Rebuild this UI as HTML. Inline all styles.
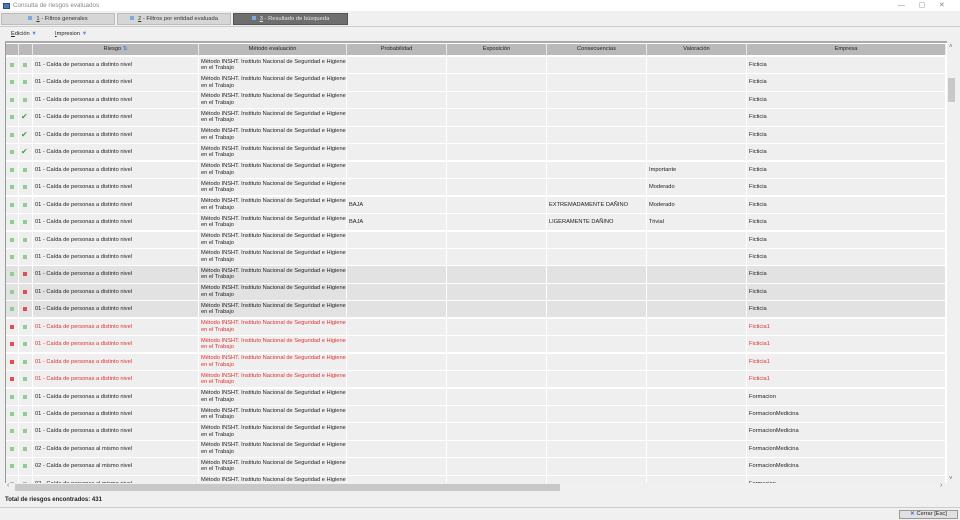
<!DOCTYPE html>
<html><head><meta charset="utf-8"><style>
*{box-sizing:border-box;margin:0;padding:0}
body{width:960px;height:520px;overflow:hidden;background:#fff;font-family:"Liberation Sans",sans-serif;font-size:5.7px;color:#222;position:relative}
.abs{position:absolute}
.tab{position:absolute;top:13px;height:12px;background:#d6d6d6;border:1px solid #bdbdbd;text-align:center;line-height:10px;font-size:5.8px;color:#333}
.tab i{display:inline-block;width:4px;height:4px;background:#7fa8e0;margin-right:4px;vertical-align:middle}
.hd{position:absolute;top:44px;height:11px;background:#b9b9b9;border-right:1px solid #e8e8e8;text-align:center;line-height:11px;color:#222}
.row{position:absolute;left:0;width:940px;height:17.45px}
.c{position:absolute;top:0;height:16.2px;background:#efefef;border-right:1.5px solid #fff;padding-left:2px;line-height:16px;white-space:nowrap;overflow:hidden}
.g .c{background:#e2e2e2}
.r .c{color:#e03030}
.m{line-height:6.6px;padding-top:1.5px;white-space:normal}
.sq{position:absolute;left:4px;top:6px;width:4px;height:4px;background:#8ecf8e}
.sq.red{background:#e05050}
.ck{position:absolute;left:2px;top:2px;color:#3aa53a;font-size:8px;line-height:12px}
.a{left:0;width:13px}.b{left:13px;width:14px}.d{left:27px;width:166px}.e{left:193px;width:148px}
.f{left:341px;width:100px}.h{left:441px;width:100px}.k{left:541px;width:100px}.l{left:641px;width:100px}.n{left:741px;width:199px}
</style></head><body>
<div class="abs" style="left:3px;top:3px;width:7px;height:6px;background:#4a7ab8;border:1px solid #2a4a80"></div>
<div class="abs" style="left:13px;top:1px;font-size:6.3px;color:#888;line-height:10px">Consulta de riesgos evaluados</div>
<div class="abs" style="left:898px;top:1px;color:#888;font-size:7px;line-height:10px">—&nbsp;&nbsp;&nbsp;&nbsp;&nbsp;&nbsp;&nbsp;▢&nbsp;&nbsp;&nbsp;&nbsp;&nbsp;&nbsp;&nbsp;✕</div>
<div class="abs" style="left:0;top:11px;width:960px;height:16px;background:#f0f0f0;border-bottom:1px solid #ccc"></div>
<div class="tab" style="left:1px;width:114px"><i></i><u>1</u> - Filtros generales</div>
<div class="tab" style="left:117px;width:114px"><i></i><u>2</u> - Filtros por entidad evaluada</div>
<div class="tab" style="left:233px;width:115px;background:#6e6e6e;color:#e8e8e8;border-color:#555"><i></i><u>3</u> - Resultado de búsqueda</div>
<div class="abs" style="left:0;top:27px;width:960px;height:480px;background:#f0f0f0"></div>
<div class="abs" style="left:11px;top:30px;line-height:9px"><u>E</u>dición <span style="color:#6a8fd0">▼</span></div>
<div class="abs" style="left:55px;top:30px;line-height:9px"><u>I</u>mpresion <span style="color:#6a8fd0">▼</span></div>
<div class="abs" style="left:5px;top:41px;width:942px;height:2px;background:#aaa"></div>
<div class="abs" style="left:5px;top:43px;width:942px;height:441px;background:#fff;border-left:1px solid #999"></div>
<div class="hd" style="left:6px;width:13px"></div>
<div class="hd" style="left:19px;width:14px"></div>
<div class="hd" style="left:33px;width:166px">Riesgo <span style="color:#3a7ad0">⇅</span></div>
<div class="hd" style="left:199px;width:148px">Método evaluación</div>
<div class="hd" style="left:347px;width:100px">Probabilidad</div>
<div class="hd" style="left:447px;width:100px">Exposición</div>
<div class="hd" style="left:547px;width:100px">Consecuencias</div>
<div class="hd" style="left:647px;width:100px">Valoración</div>
<div class="hd" style="left:747px;width:199px">Empresa</div>
<div class="abs" style="left:6px;top:57px;width:940px;height:426px;overflow:hidden">
<div class="row" style="top:0px"><div class="c a"><i class="sq"></i></div><div class="c b"><i class="sq"></i></div><div class="c d">01 - Caída de personas a distinto nivel</div><div class="c e m">Método INSHT. Instituto Nacional de Seguridad e Higiene en el Trabajo</div><div class="c f"></div><div class="c h"></div><div class="c k"></div><div class="c l"></div><div class="c n">Ficticia</div></div>
<div class="row" style="top:17.45px"><div class="c a"><i class="sq"></i></div><div class="c b"><i class="sq"></i></div><div class="c d">01 - Caída de personas a distinto nivel</div><div class="c e m">Método INSHT. Instituto Nacional de Seguridad e Higiene en el Trabajo</div><div class="c f"></div><div class="c h"></div><div class="c k"></div><div class="c l"></div><div class="c n">Ficticia</div></div>
<div class="row" style="top:34.9px"><div class="c a"><i class="sq"></i></div><div class="c b"><i class="sq"></i></div><div class="c d">01 - Caída de personas a distinto nivel</div><div class="c e m">Método INSHT. Instituto Nacional de Seguridad e Higiene en el Trabajo</div><div class="c f"></div><div class="c h"></div><div class="c k"></div><div class="c l"></div><div class="c n">Ficticia</div></div>
<div class="row" style="top:52.35px"><div class="c a"><i class="sq"></i></div><div class="c b"><span class="ck">✔</span></div><div class="c d">01 - Caída de personas a distinto nivel</div><div class="c e m">Método INSHT. Instituto Nacional de Seguridad e Higiene en el Trabajo</div><div class="c f"></div><div class="c h"></div><div class="c k"></div><div class="c l"></div><div class="c n">Ficticia</div></div>
<div class="row" style="top:69.8px"><div class="c a"><i class="sq"></i></div><div class="c b"><span class="ck">✔</span></div><div class="c d">01 - Caída de personas a distinto nivel</div><div class="c e m">Método INSHT. Instituto Nacional de Seguridad e Higiene en el Trabajo</div><div class="c f"></div><div class="c h"></div><div class="c k"></div><div class="c l"></div><div class="c n">Ficticia</div></div>
<div class="row" style="top:87.25px"><div class="c a"><i class="sq"></i></div><div class="c b"><span class="ck">✔</span></div><div class="c d">01 - Caída de personas a distinto nivel</div><div class="c e m">Método INSHT. Instituto Nacional de Seguridad e Higiene en el Trabajo</div><div class="c f"></div><div class="c h"></div><div class="c k"></div><div class="c l"></div><div class="c n">Ficticia</div></div>
<div class="row" style="top:104.7px"><div class="c a"><i class="sq"></i></div><div class="c b"><i class="sq"></i></div><div class="c d">01 - Caída de personas a distinto nivel</div><div class="c e m">Método INSHT. Instituto Nacional de Seguridad e Higiene en el Trabajo</div><div class="c f"></div><div class="c h"></div><div class="c k"></div><div class="c l">Importante</div><div class="c n">Ficticia</div></div>
<div class="row" style="top:122.15px"><div class="c a"><i class="sq"></i></div><div class="c b"><i class="sq"></i></div><div class="c d">01 - Caída de personas a distinto nivel</div><div class="c e m">Método INSHT. Instituto Nacional de Seguridad e Higiene en el Trabajo</div><div class="c f"></div><div class="c h"></div><div class="c k"></div><div class="c l">Moderado</div><div class="c n">Ficticia</div></div>
<div class="row" style="top:139.6px"><div class="c a"><i class="sq"></i></div><div class="c b"><i class="sq"></i></div><div class="c d">01 - Caída de personas a distinto nivel</div><div class="c e m">Método INSHT. Instituto Nacional de Seguridad e Higiene en el Trabajo</div><div class="c f">BAJA</div><div class="c h"></div><div class="c k">EXTREMADAMENTE DAÑINO</div><div class="c l">Moderado</div><div class="c n">Ficticia</div></div>
<div class="row" style="top:157.05px"><div class="c a"><i class="sq"></i></div><div class="c b"><i class="sq"></i></div><div class="c d">01 - Caída de personas a distinto nivel</div><div class="c e m">Método INSHT. Instituto Nacional de Seguridad e Higiene en el Trabajo</div><div class="c f">BAJA</div><div class="c h"></div><div class="c k">LIGERAMENTE DAÑINO</div><div class="c l">Trivial</div><div class="c n">Ficticia</div></div>
<div class="row" style="top:174.5px"><div class="c a"><i class="sq"></i></div><div class="c b"><i class="sq"></i></div><div class="c d">01 - Caída de personas a distinto nivel</div><div class="c e m">Método INSHT. Instituto Nacional de Seguridad e Higiene en el Trabajo</div><div class="c f"></div><div class="c h"></div><div class="c k"></div><div class="c l"></div><div class="c n">Ficticia</div></div>
<div class="row" style="top:191.95px"><div class="c a"><i class="sq"></i></div><div class="c b"><i class="sq"></i></div><div class="c d">01 - Caída de personas a distinto nivel</div><div class="c e m">Método INSHT. Instituto Nacional de Seguridad e Higiene en el Trabajo</div><div class="c f"></div><div class="c h"></div><div class="c k"></div><div class="c l"></div><div class="c n">Ficticia</div></div>
<div class="row g" style="top:209.4px"><div class="c a"><i class="sq"></i></div><div class="c b"><i class="sq red"></i></div><div class="c d">01 - Caída de personas a distinto nivel</div><div class="c e m">Método INSHT. Instituto Nacional de Seguridad e Higiene en el Trabajo</div><div class="c f"></div><div class="c h"></div><div class="c k"></div><div class="c l"></div><div class="c n">Ficticia</div></div>
<div class="row g" style="top:226.85px"><div class="c a"><i class="sq"></i></div><div class="c b"><i class="sq red"></i></div><div class="c d">01 - Caída de personas a distinto nivel</div><div class="c e m">Método INSHT. Instituto Nacional de Seguridad e Higiene en el Trabajo</div><div class="c f"></div><div class="c h"></div><div class="c k"></div><div class="c l"></div><div class="c n">Ficticia</div></div>
<div class="row g" style="top:244.3px"><div class="c a"><i class="sq"></i></div><div class="c b"><i class="sq red"></i></div><div class="c d">01 - Caída de personas a distinto nivel</div><div class="c e m">Método INSHT. Instituto Nacional de Seguridad e Higiene en el Trabajo</div><div class="c f"></div><div class="c h"></div><div class="c k"></div><div class="c l"></div><div class="c n">Ficticia</div></div>
<div class="row r" style="top:261.75px"><div class="c a"><i class="sq red"></i></div><div class="c b"><i class="sq"></i></div><div class="c d">01 - Caída de personas a distinto nivel</div><div class="c e m">Método INSHT. Instituto Nacional de Seguridad e Higiene en el Trabajo</div><div class="c f"></div><div class="c h"></div><div class="c k"></div><div class="c l"></div><div class="c n">Ficticia1</div></div>
<div class="row r" style="top:279.2px"><div class="c a"><i class="sq red"></i></div><div class="c b"><i class="sq"></i></div><div class="c d">01 - Caída de personas a distinto nivel</div><div class="c e m">Método INSHT. Instituto Nacional de Seguridad e Higiene en el Trabajo</div><div class="c f"></div><div class="c h"></div><div class="c k"></div><div class="c l"></div><div class="c n">Ficticia1</div></div>
<div class="row r" style="top:296.65px"><div class="c a"><i class="sq red"></i></div><div class="c b"><i class="sq"></i></div><div class="c d">01 - Caída de personas a distinto nivel</div><div class="c e m">Método INSHT. Instituto Nacional de Seguridad e Higiene en el Trabajo</div><div class="c f"></div><div class="c h"></div><div class="c k"></div><div class="c l"></div><div class="c n">Ficticia1</div></div>
<div class="row r" style="top:314.1px"><div class="c a"><i class="sq red"></i></div><div class="c b"><i class="sq"></i></div><div class="c d">01 - Caída de personas a distinto nivel</div><div class="c e m">Método INSHT. Instituto Nacional de Seguridad e Higiene en el Trabajo</div><div class="c f"></div><div class="c h"></div><div class="c k"></div><div class="c l"></div><div class="c n">Ficticia1</div></div>
<div class="row" style="top:331.55px"><div class="c a"><i class="sq"></i></div><div class="c b"><i class="sq"></i></div><div class="c d">01 - Caída de personas a distinto nivel</div><div class="c e m">Método INSHT. Instituto Nacional de Seguridad e Higiene en el Trabajo</div><div class="c f"></div><div class="c h"></div><div class="c k"></div><div class="c l"></div><div class="c n">Formacion</div></div>
<div class="row" style="top:349px"><div class="c a"><i class="sq"></i></div><div class="c b"><i class="sq"></i></div><div class="c d">01 - Caída de personas a distinto nivel</div><div class="c e m">Método INSHT. Instituto Nacional de Seguridad e Higiene en el Trabajo</div><div class="c f"></div><div class="c h"></div><div class="c k"></div><div class="c l"></div><div class="c n">FormacionMedicina</div></div>
<div class="row" style="top:366.45px"><div class="c a"><i class="sq"></i></div><div class="c b"><i class="sq"></i></div><div class="c d">01 - Caída de personas a distinto nivel</div><div class="c e m">Método INSHT. Instituto Nacional de Seguridad e Higiene en el Trabajo</div><div class="c f"></div><div class="c h"></div><div class="c k"></div><div class="c l"></div><div class="c n">FormacionMedicina</div></div>
<div class="row" style="top:383.9px"><div class="c a"><i class="sq"></i></div><div class="c b"><i class="sq"></i></div><div class="c d">02 - Caída de personas al mismo nivel</div><div class="c e m">Método INSHT. Instituto Nacional de Seguridad e Higiene en el Trabajo</div><div class="c f"></div><div class="c h"></div><div class="c k"></div><div class="c l"></div><div class="c n">FormacionMedicina</div></div>
<div class="row" style="top:401.35px"><div class="c a"><i class="sq"></i></div><div class="c b"><i class="sq"></i></div><div class="c d">02 - Caída de personas al mismo nivel</div><div class="c e m">Método INSHT. Instituto Nacional de Seguridad e Higiene en el Trabajo</div><div class="c f"></div><div class="c h"></div><div class="c k"></div><div class="c l"></div><div class="c n">FormacionMedicina</div></div>
<div class="row" style="top:418.8px"><div class="c a"><i class="sq"></i></div><div class="c b"><i class="sq"></i></div><div class="c d">02 - Caída de personas al mismo nivel</div><div class="c e m">Método INSHT. Instituto Nacional de Seguridad e Higiene en el Trabajo</div><div class="c f"></div><div class="c h"></div><div class="c k"></div><div class="c l"></div><div class="c n">Formacion</div></div>
</div>
<div class="abs" style="left:947px;top:44px;width:10px;height:439px;background:#f0f0f0"></div>
<div class="abs" style="left:949px;top:44px;color:#666;font-size:6px">˄</div>
<div class="abs" style="left:948px;top:78px;width:7px;height:24px;background:#c8c8c8"></div>
<div class="abs" style="left:949px;top:476px;color:#666;font-size:6px">˅</div>
<div class="abs" style="left:5px;top:483px;width:942px;height:9px;background:#f0f0f0"></div>
<div class="abs" style="left:15px;top:484px;width:545px;height:7px;background:#c8c8c8"></div>
<div class="abs" style="left:7px;top:482px;color:#666;font-size:7px">‹</div>
<div class="abs" style="left:940px;top:482px;color:#666;font-size:7px">›</div>
<div class="abs" style="left:5px;top:497px;font-weight:bold;font-size:6px">Total de riesgos encontrados: 431</div>
<div class="abs" style="left:0;top:507px;width:960px;height:1px;background:#ccc"></div>
<div class="abs" style="left:0;top:508px;width:960px;height:12px;background:#f0f0f0"></div>
<div class="abs" style="left:899px;top:510px;width:59px;height:9px;background:#e1e1e1;border:1px solid #999;text-align:center;line-height:7px"><span style="color:#3a6ad0;font-weight:bold">✕</span> Cerrar [Esc]</div>
</body></html>
